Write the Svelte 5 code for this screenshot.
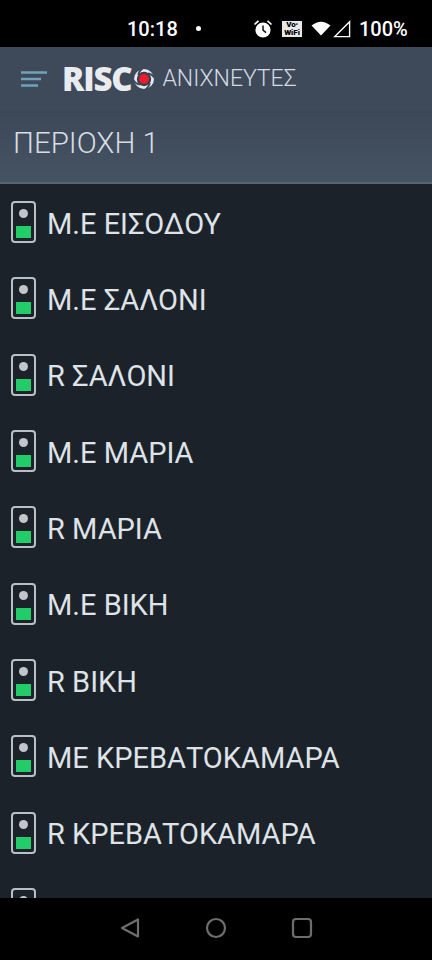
<script lang="ts">
  const detectors = [
    "Μ.Ε ΕΙΣΟΔΟΥ",
    "Μ.Ε ΣΑΛΟΝΙ",
    "R ΣΑΛΟΝΙ",
    "Μ.Ε ΜΑΡΙΑ",
    "R ΜΑΡΙΑ",
    "Μ.Ε ΒΙΚΗ",
    "R ΒΙΚΗ",
    "ΜΕ ΚΡΕΒΑΤΟΚΑΜΑΡΑ",
    "R ΚΡΕΒΑΤΟΚΑΜΑΡΑ",
    "",
  ];
</script>

<div class="phone">
  <div class="status-bar">
    <span class="clock">10:18</span>
    <span class="dot"></span>
    <svg class="alarm" viewBox="0 0 20 20" width="20" height="20">
      <circle cx="10" cy="11" r="7.6" fill="#fff" />
      <path d="M10 6.5V11.2L13 13.6" fill="none" stroke="#111" stroke-width="1.5" />
      <path d="M1.5 5.5L5.5 1.8M18.5 5.5L14.5 1.8" stroke="#fff" stroke-width="1.7" fill="none" />
    </svg>
    <span class="vowifi"><span>Vo<small>⁴</small></span><span>WiFi</span></span>
    <svg class="wifi" viewBox="0 0 20 15" width="20" height="15">
      <path d="M0.5 4.6Q10 -3 19.5 4.6L10 14.5Z" fill="#fff" />
    </svg>
    <svg class="signal" viewBox="0 0 18 18" width="18" height="18">
      <path d="M16.6 1.8V16.6H1.8Z" fill="none" stroke="#fff" stroke-width="1.4" />
    </svg>
    <span class="battery">100%</span>
  </div>

  <header class="app-bar">
    <svg class="menu" viewBox="0 0 28 18" width="28" height="18">
      <path d="M1 2.5H27M1 9H21M1 15.5H18" stroke="#6fa3b8" stroke-width="2.4" fill="none" />
    </svg>
    <span class="brand">RISC</span>
    <svg class="swirl" viewBox="0 0 26 26" width="26" height="26">
      <circle cx="13" cy="13" r="10" fill="#e8ecef" />
      <circle cx="13" cy="13" r="7.2" fill="#35404e" />
      <path d="M13 1.5C9 4 7.6 6.4 7.4 9" fill="none" stroke="#3e4a5a" stroke-width="2" />
      <path d="M24.5 13C22 9 19.6 7.6 17 7.4" fill="none" stroke="#3e4a5a" stroke-width="2" />
      <path d="M13 24.5C17 22 18.4 19.6 18.6 17" fill="none" stroke="#3e4a5a" stroke-width="2" />
      <path d="M1.5 13C4 17 6.4 18.4 9 18.6" fill="none" stroke="#3e4a5a" stroke-width="2" />
      <circle cx="13" cy="13" r="5" fill="#ec1c2c" />
    </svg>
    <span class="title">ΑΝΙΧΝΕΥΤΕΣ</span>
  </header>

  <div class="section">ΠΕΡΙΟΧΗ 1</div>

  <ul class="list">
    {#each detectors as name}
      <li class="row">
        <span class="sensor"><span class="led"></span><span class="level"></span></span>
        <span class="name">{name}</span>
      </li>
    {/each}
  </ul>

  <nav class="nav-bar">
    <svg viewBox="0 0 22 22" width="22" height="22">
      <path d="M19 2.5V19.5L3 11Z" fill="none" stroke="#6e6e6e" stroke-width="2.2" stroke-linejoin="round" />
    </svg>
    <svg viewBox="0 0 22 22" width="22" height="22">
      <circle cx="11" cy="11" r="9" fill="none" stroke="#6e6e6e" stroke-width="2.2" />
    </svg>
    <svg viewBox="0 0 22 22" width="22" height="22">
      <rect x="2" y="2" width="18" height="18" rx="3" fill="none" stroke="#6e6e6e" stroke-width="2.2" />
    </svg>
  </nav>
</div>

<style>
  :global(body) {
    margin: 0;
    background: #000;
  }

  .phone {
    display: flex;
    flex-direction: column;
    height: 960px;
    overflow: hidden;
    font-family: Roboto, "Noto Sans", sans-serif;
  }

  .status-bar {
    flex: 0 0 47px;
    display: flex;
    align-items: center;
    padding: 10px 0 0 127px;
    box-sizing: border-box;
    background: #000;
    color: #fff;
  }

  .clock {
    font-size: 20px;
    font-weight: 500;
    width: 52px;
  }

  .dot {
    width: 5px;
    height: 5px;
    margin-left: 17px;
    border-radius: 50%;
    background: #fff;
  }

  .alarm {
    margin-left: 52px;
  }

  .vowifi {
    display: flex;
    flex-direction: column;
    align-items: center;
    justify-content: center;
    width: 20px;
    height: 16px;
    margin-left: 9px;
    background: #e8e8e8;
    color: #000;
    font-size: 8px;
    font-weight: 900;
    line-height: 8px;
  }

  .vowifi small {
    font-size: 5px;
  }

  .wifi {
    margin-left: 9px;
  }

  .signal {
    margin-left: 2px;
  }

  .battery {
    margin-left: 8px;
    font-size: 20px;
    font-weight: 500;
  }

  .app-bar {
    flex: 0 0 63px;
    display: flex;
    align-items: center;
    padding: 0 0 0 20px;
    box-sizing: border-box;
    background: #3e4a5a;
  }

  .brand {
    margin-left: 14px;
    color: #e8ecef;
    font-family: "Open Sans", sans-serif;
    font-size: 33px;
    font-weight: 800;
    letter-spacing: -1.2px;
    line-height: 1;
  }

  .title {
    margin-left: 5px;
    color: #d5dbe1;
    font-size: 23px;
    font-weight: 300;
  }

  .section {
    flex: 0 0 74px;
    display: flex;
    align-items: center;
    padding: 0 0 7px 13px;
    box-sizing: border-box;
    background: linear-gradient(#3c4857, #465363);
    border-bottom: 2px solid #59636f;
    color: #d8dde2;
    font-size: 29.5px;
    font-weight: 300;
  }

  .list {
    flex: 1;
    min-height: 0;
    margin: 0;
    padding: 0;
    overflow: hidden;
    list-style: none;
    background: #1b222a;
  }

  .row {
    display: flex;
    align-items: center;
    gap: 11px;
    height: 76.33px;
    padding-left: 11px;
  }

  .sensor {
    display: flex;
    flex-direction: column;
    align-items: center;
    justify-content: space-between;
    width: 25px;
    height: 42px;
    padding: 6px 3px 3px;
    box-sizing: border-box;
    border: 2px solid #b9bfc6;
    border-radius: 4px;
  }

  .led {
    width: 9px;
    height: 9px;
    border-radius: 50%;
    background: #c2c5ca;
  }

  .level {
    width: 100%;
    height: 12px;
    background: #22cc68;
  }

  .name {
    padding-top: 3px;
    color: #dfe3e7;
    font-size: 29px;
    white-space: nowrap;
  }

  .nav-bar {
    flex: 0 0 62px;
    display: flex;
    align-items: center;
    justify-content: center;
    gap: 64px;
    padding-bottom: 2px;
    box-sizing: border-box;
    background: #000;
  }
</style>
